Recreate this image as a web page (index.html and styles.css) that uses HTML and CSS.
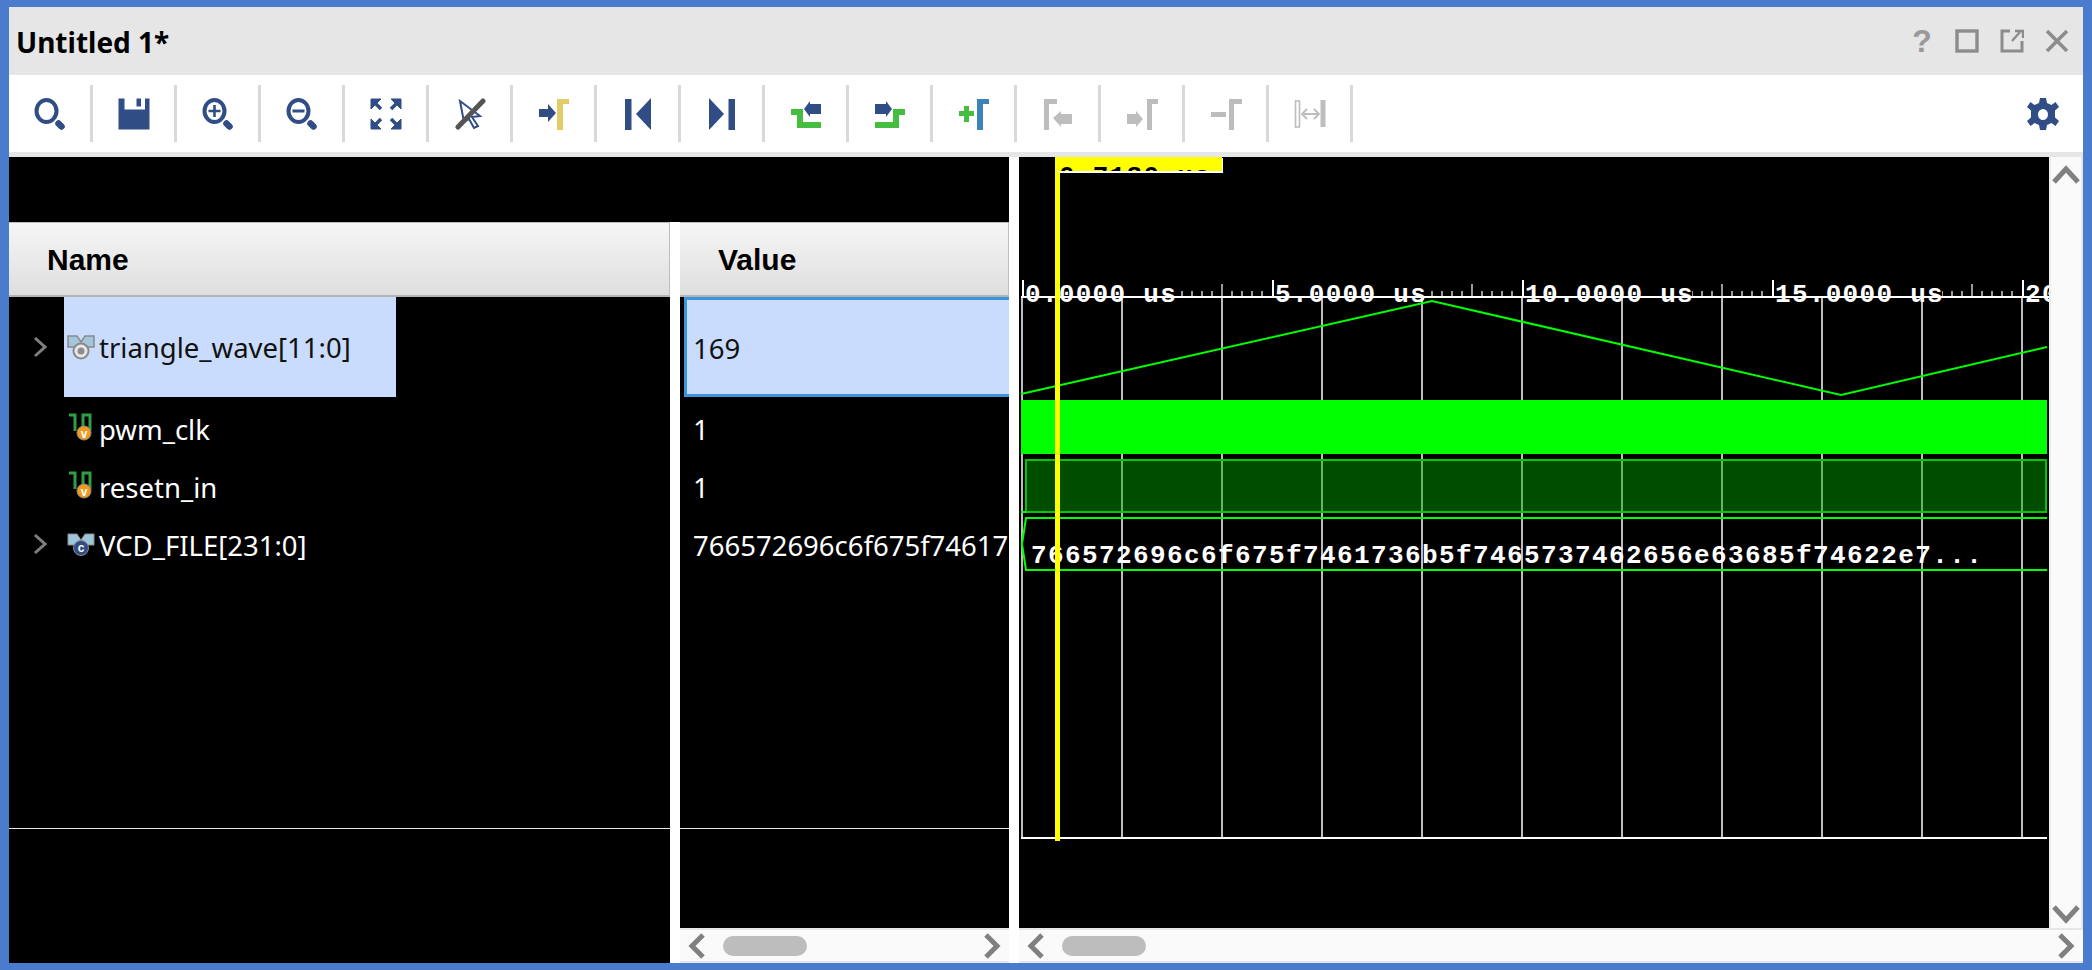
FILE: index.html
```html
<!DOCTYPE html>
<html lang="en">
<head>
<meta charset="utf-8">
<title>Untitled 1*</title>
<link rel="stylesheet" href="styles.css">
</head>
<body>
<div class="window">
  <header class="titlebar">
    <span class="title">Untitled 1*</span>
    <div class="win-actions">
      <span class="win-btn help">?</span>
      <span class="win-btn"><svg width="24" height="24" viewBox="0 0 24 24"><rect x="2" y="2" width="20" height="20" fill="none" stroke="#8c8c8c" stroke-width="3.4"/></svg></span>
      <span class="win-btn"><svg width="24" height="24" viewBox="0 0 24 24"><path d="M10 2H2V22H22V12" fill="none" stroke="#8c8c8c" stroke-width="3"/><path d="M12 12L20 3M15 2H23V9" fill="none" stroke="#8c8c8c" stroke-width="2.4"/></svg></span>
      <span class="win-btn"><svg width="24" height="24" viewBox="0 0 24 24"><path d="M2 2L22 22M22 2L2 22" fill="none" stroke="#8c8c8c" stroke-width="3.6"/></svg></span>
    </div>
  </header>

  <div class="toolbar">
    <button class="tool"><svg width="32" height="32" viewBox="0 0 32 32"><ellipse cx="12.500" cy="13" rx="10" ry="11" fill="none" stroke="#314d85" stroke-width="4"/><path d="M24.500 25.500L27.500 28.500" stroke="#314d85" stroke-width="6.500" stroke-linecap="round"/></svg></button>
    <button class="tool"><svg width="32" height="32" viewBox="0 0 32 32"><path d="M0.500 0.500H6.500V11.500H27V0.500H31.500V31.500H0.500Z" fill="#314d85"/><rect x="18.500" y="0.500" width="4.500" height="8" fill="#314d85"/></svg></button>
    <button class="tool"><svg width="32" height="32" viewBox="0 0 32 32"><ellipse cx="12.500" cy="13" rx="10" ry="11" fill="none" stroke="#314d85" stroke-width="4"/><path d="M24.500 25.500L27.500 28.500" stroke="#314d85" stroke-width="6.500" stroke-linecap="round"/><path d="M12.500 7V19M6.500 13H18.500" stroke="#314d85" stroke-width="2.600"/></svg></button>
    <button class="tool"><svg width="32" height="32" viewBox="0 0 32 32"><ellipse cx="12.500" cy="13" rx="10" ry="11" fill="none" stroke="#314d85" stroke-width="4"/><path d="M24.500 25.500L27.500 28.500" stroke="#314d85" stroke-width="6.500" stroke-linecap="round"/><path d="M6.500 13H18.500" stroke="#314d85" stroke-width="3"/></svg></button>
    <button class="tool"><svg width="32" height="32" viewBox="0 0 32 32" fill="#314d85" stroke="#314d85"><path d="M1 1H11L1 11Z"/><path d="M31 1H21L31 11Z"/><path d="M1 31H11L1 21Z"/><path d="M31 31H21L31 21Z"/><path d="M5 5L11 11M27 5L21 11M5 27L11 21M27 27L21 21" stroke-width="3.500"/></svg></button>
    <button class="tool"><svg width="32" height="32" viewBox="0 0 32 32"><path d="M6 3L26 18L18 19L24 28L20 30L15 21L10 24Z" fill="#fff" stroke="#314d85" stroke-width="2"/><path d="M4 29L29 3" stroke="#555" stroke-width="5" stroke-linecap="round"/></svg></button>
    <button class="tool"><svg width="32" height="32" viewBox="0 0 32 32"><path d="M1 11H10V6L18 15L10 24V19H1Z" fill="#314d85"/><path d="M19 32V1H31V6H25V32Z" fill="#e3cc68"/></svg></button>
    <button class="tool"><svg width="32" height="32" viewBox="0 0 32 32" fill="#314d85"><rect x="3" y="1" width="6.500" height="31"/><path d="M29 0V32L14 16Z"/></svg></button>
    <button class="tool"><svg width="32" height="32" viewBox="0 0 32 32" fill="#314d85"><rect x="22.500" y="1" width="6.500" height="31"/><path d="M3 0V32L18 16Z"/></svg></button>
    <button class="tool"><svg width="32" height="32" viewBox="0 0 32 32"><path d="M1 14H10V27H31" fill="none" stroke="#45bd3f" stroke-width="6"/><path d="M14 11L20 3V6H31V16H20V19Z" fill="#314d85"/></svg></button>
    <button class="tool"><svg width="32" height="32" viewBox="0 0 32 32"><path d="M1 27H22V14H31" fill="none" stroke="#45bd3f" stroke-width="6"/><path d="M18 11L12 3V6H1V16H12V19Z" fill="#314d85"/></svg></button>
    <button class="tool"><svg width="32" height="32" viewBox="0 0 32 32"><path d="M1 13H6V8H11V13H16V18H11V24H6V18H1Z" fill="#45bd3f"/><path d="M19 32V1H31V6H25V32Z" fill="#3a84b8"/></svg></button>
    <button class="tool"><svg width="32" height="32" viewBox="0 0 32 32" fill="#bdbdbd"><path d="M2 32V1H15V6H7V32Z"/><path d="M11 20L19 13V16H30V26H19V29Z"/></svg></button>
    <button class="tool"><svg width="32" height="32" viewBox="0 0 32 32" fill="#bdbdbd"><path d="M21 32V1H33V6H26V32Z"/><path d="M17 21L10 13V16H1V26H10V29Z"/></svg></button>
    <button class="tool"><svg width="32" height="32" viewBox="0 0 32 32" fill="#bdbdbd"><path d="M19 32V1H32V6H24V32Z"/><rect x="1" y="14" width="15" height="5"/></svg></button>
    <button class="tool"><svg width="32" height="32" viewBox="0 0 32 32"><rect x="1.500" y="3" width="4" height="26" fill="none" stroke="#bdbdbd" stroke-width="1.600"/><rect x="26.500" y="2" width="5" height="27" fill="#bdbdbd"/><path d="M9 16H24M13 11L8 16L13 21M20 11L25 16L20 21" fill="none" stroke="#bdbdbd" stroke-width="1.800"/></svg></button>
    <button class="tool gear"><svg width="32" height="32" viewBox="0 0 32 32" fill="#314d85"><path fill-rule="evenodd" d="M13 0H19L20 5L24.500 7L28.500 4L32 9L28 12.500V19.500L32 23L28.500 28L24.500 25L20 27L19 32H13L12 27L7.500 25L3.500 28L0 23L4 19.500V12.500L0 9L3.500 4L7.500 7L12 5ZM16 11A5 5.500 0 1 0 16 22A5 5.500 0 1 0 16 11Z"/></svg></button>
  </div>
  <div class="strip"></div>

  <main class="panes">
    <section class="signals">
      <div class="signals-top"></div>
      <div class="columns">
        <div class="col col-name">
          <div class="col-head">Name</div>
          <div class="list">
            <div class="row row-sel">
              <svg class="chev" width="16" height="22" viewBox="0 0 16 22"><path d="M3 2L13 11L3 20" fill="none" stroke="#808080" stroke-width="3"/></svg>
              <div class="sel-box">
                <svg class="sig-icon bus-icon" width="30" height="26" viewBox="0 0 30 26"><path d="M2 2H11L15 8L19 2H28V13H22L15 9L8 13H2Z" fill="#a3c6da" stroke="#8a8a8a" stroke-width="1.500"/><circle cx="15" cy="17" r="7.500" fill="#e8e8e8" stroke="#8a8a8a" stroke-width="2"/><circle cx="15" cy="17" r="3.500" fill="#8c8c8c"/></svg>
                <span class="label">triangle_wave[11:0]</span>
              </div>
            </div>
            <div class="row">
              <span class="chev-slot"></span>
              <svg class="sig-icon bit-icon" width="30" height="30" viewBox="0 0 30 30"><path d="M3 4H9V20M17 20V4H24V20" fill="none" stroke="#2f9e44" stroke-width="3"/><circle cx="18" cy="22" r="7" fill="#f39a1e" stroke="#8a8a8a" stroke-width="1"/><text x="18" y="26.500" class="badge">v</text></svg>
              <span class="label">pwm_clk</span>
            </div>
            <div class="row">
              <span class="chev-slot"></span>
              <svg class="sig-icon bit-icon" width="30" height="30" viewBox="0 0 30 30"><path d="M3 4H9V20M17 20V4H24V20" fill="none" stroke="#2f9e44" stroke-width="3"/><circle cx="18" cy="22" r="7" fill="#f39a1e" stroke="#8a8a8a" stroke-width="1"/><text x="18" y="26.500" class="badge">v</text></svg>
              <span class="label">resetn_in</span>
            </div>
            <div class="row">
              <svg class="chev chev-bus" width="16" height="22" viewBox="0 0 16 22"><path d="M3 2L13 11L3 20" fill="none" stroke="#808080" stroke-width="3"/></svg>
              <svg class="sig-icon bus-icon" width="30" height="26" viewBox="0 0 30 26"><path d="M2 1H11L15 7L19 1H28V12H22L15 8L8 12H2Z" fill="#9ec6db" stroke="#8a8a8a" stroke-width="1"/><circle cx="15" cy="15" r="7.500" fill="#314d85" stroke="#8a8a8a" stroke-width="1"/><text x="15" y="19" class="badge">c</text></svg>
              <span class="label">VCD_FILE[231:0]</span>
            </div>
          </div>
        </div>
        <div class="col col-value">
          <div class="col-head">Value</div>
          <div class="list">
            <div class="row row-sel"><div class="val-sel label">169</div></div>
            <div class="row val label">1</div>
            <div class="row val label">1</div>
            <div class="row val label">766572696c6f675f74617</div>
          </div>
          <div class="filler"></div>
          <div class="hscroll">
            <svg width="18" height="26" viewBox="0 0 18 26"><path d="M15 2L4 13L15 24" fill="none" stroke="#808080" stroke-width="5"/></svg>
            <span class="thumb"></span>
            <svg class="end" width="18" height="26" viewBox="0 0 18 26"><path d="M3 2L14 13L3 24" fill="none" stroke="#808080" stroke-width="5"/></svg>
          </div>
        </div>
      </div>
    </section>

    <section class="wave-pane">
      <div class="wave-main">
        <svg class="wave" width="1030" height="771" viewBox="1019 157 1030 771">
          <defs>
            <pattern id="ticks" x="1022" y="280" width="250" height="17" patternUnits="userSpaceOnUse">
              <path d="M10 11V17M20 11V17M30 11V17M40 11V17M60 11V17M70 11V17M80 11V17M90 11V17M110 11V17M120 11V17M130 11V17M140 11V17M160 11V17M170 11V17M180 11V17M190 11V17M210 11V17M220 11V17M230 11V17M240 11V17" stroke="#fff" stroke-width="1.200"/>
              <path d="M50 4V17M100 4V17M150 4V17M200 4V17" stroke="#fff" stroke-width="1.200"/>
              <path d="M1 0V17" stroke="#fff" stroke-width="2"/>
            </pattern>
          </defs>
          <rect x="1019" y="157" width="1030" height="771" fill="#000"/>
          <rect x="1022" y="280" width="1027" height="17" fill="url(#ticks)"/>
          <g class="ruler-bg">
            <rect x="1026" y="283" width="150" height="14"/>
            <rect x="1276" y="283" width="150" height="14"/>
            <rect x="1526" y="283" width="166" height="14"/>
            <rect x="1776" y="283" width="166" height="14"/>
            <rect x="2026" y="283" width="23" height="14"/>
          </g>
          <path class="grid" d="M1022 297V837M1122 297V837M1222 297V837M1322 297V837M1422 297V837M1522 297V837M1622 297V837M1722 297V837M1822 297V837M1922 297V837M2022 297V837"/>
          <rect x="1021" y="296" width="1028" height="2" fill="#fff"/>
          <g class="ruler-text">
            <text x="1025" y="302">0.0000 us</text>
            <text x="1275" y="302">5.0000 us</text>
            <text x="1525" y="302">10.0000 us</text>
            <text x="1775" y="302">15.0000 us</text>
            <text x="2025" y="302">20.0000 us</text>
          </g>
          <path class="trace" d="M1021 394L1432 301L1841 395L2047 347"/>
          <rect x="1021" y="400" width="1026" height="54" fill="#00ff00"/>
          <rect x="1026" y="460" width="1020" height="52" class="bit"/>
          <path class="trace" d="M1021 512H1026"/>
          <path class="trace" d="M2047 518H1026L1022 544L1026 570H2047"/>
          <text x="1031" y="563" class="bus-text">766572696c6f675f7461736b5f7465737462656e63685f74622e7...</text>
          <rect x="1021" y="837" width="1026" height="2" fill="#fff"/>
          <rect x="1056" y="158" width="165" height="13" fill="#ffff00"/>
          <path d="M1056 172H1222V158M1056 157.500H1222" fill="none" stroke="#fff" stroke-width="2"/>
          <svg x="1056" y="157" width="166" height="14" viewBox="1056 157 166 14"><rect x="1056" y="157" width="166" height="14" fill="#ffff00"/><text x="1059" y="184" class="cursor-text">0.7180 us</text></svg>
          <rect x="1055" y="172" width="5" height="669" fill="#ffff00"/>
          <rect x="1055" y="157" width="2" height="15" fill="#ffff00"/>
        </svg>
        <div class="vscroll">
          <svg width="28" height="20" viewBox="0 0 28 20"><path d="M2 17L14 4L26 17" fill="none" stroke="#808080" stroke-width="5"/></svg>
          <svg width="28" height="20" viewBox="0 0 28 20"><path d="M2 3L14 16L26 3" fill="none" stroke="#808080" stroke-width="5"/></svg>
        </div>
      </div>
      <div class="hscroll">
        <svg width="18" height="26" viewBox="0 0 18 26"><path d="M15 2L4 13L15 24" fill="none" stroke="#808080" stroke-width="5"/></svg>
        <span class="thumb"></span>
        <svg class="end" width="18" height="26" viewBox="0 0 18 26"><path d="M3 2L14 13L3 24" fill="none" stroke="#808080" stroke-width="5"/></svg>
      </div>
    </section>
  </main>
</div>
</body>
</html>
```

FILE: styles.css
```css
* { box-sizing: border-box; }
html, body { margin: 0; height: 100%; background: #fff; }
body { font-family: "Noto Sans", "Open Sans", sans-serif; overflow: hidden; }

.window {
  width: 2092px;
  height: 970px;
  border: solid #4a7bcd;
  border-width: 7px 9px;
  display: flex;
  flex-direction: column;
  background: #fff;
}

.titlebar {
  height: 68px;
  flex: none;
  background: #e6e6e6;
  display: flex;
  align-items: center;
  padding: 2px 14px 0 7px;
}
.title { font-size: 28px; font-weight: 700; color: #000; }
.win-actions { margin-left: auto; display: flex; align-items: center; gap: 21px; margin-top: -2px; }
.win-btn { width: 24px; height: 24px; display: flex; align-items: center; justify-content: center; }
.help { font-family: "Liberation Sans", sans-serif; font-size: 32px; font-weight: 700; color: #999; }

.toolbar {
  height: 77px;
  flex: none;
  background: #fff;
  display: flex;
  align-items: center;
}
.tool {
  width: 84px;
  height: 57px;
  padding: 0;
  border: 0;
  border-right: 3px solid #d9d9d9;
  background: none;
  display: flex;
  align-items: center;
  justify-content: center;
  flex: none;
}
.tool.gear { margin-left: auto; border-right: 0; width: 80px; }
.strip { height: 5px; flex: none; background: #e6e6e6; }

.panes { flex: 1; min-height: 0; display: flex; gap: 10px; }

.signals { width: 1000px; flex: none; display: flex; flex-direction: column; }
.signals-top { height: 65px; flex: none; background: #000; }
.columns { flex: 1; min-height: 0; display: flex; gap: 10px; }

.col { background: #000; display: flex; flex-direction: column; min-width: 0; }
.col-name { width: 661px; flex: none; }
.col-value { width: 329px; flex: none; }

.col-head {
  height: 75px;
  flex: none;
  display: flex;
  align-items: center;
  font-family: "Liberation Sans", sans-serif;
  font-size: 30px;
  font-weight: 700;
  color: #000;
  padding-top: 2px;
  background: linear-gradient(#f6f6f6, #dedede);
  border-top: 1px solid #bdbdbd;
  border-right: 1px solid #bdbdbd;
  border-bottom: 2px solid #b4b4b4;
}
.col-name .col-head { padding-left: 38px; }
.col-value .col-head { padding-left: 38px; }

.list { height: 532px; flex: none; border-bottom: 1px solid #e6e6e6; overflow: hidden; }
.row { height: 58px; display: flex; align-items: center; color: #fff; white-space: nowrap; }
.row-sel { height: 100px; margin-bottom: 4px; align-items: stretch; }

.label { font-size: 27.5px; }
.row > .label { margin-top: -2px; }
.chev { margin-left: 23px; flex: none; }
.chev-bus { margin-top: -4px; }
.row-sel .chev { align-self: center; }
.chev-slot { width: 39px; flex: none; }
.sig-icon { flex: none; }
.bit-icon { margin: -8px 3px 0 18px; }
.row > .bus-icon { margin: 0 3px 0 18px; }
.sel-box .bus-icon { margin: 0 3px 0 2px; }

.sel-box {
  width: 332px;
  margin-left: 16px;
  background: #c9dcfd;
  color: #111;
  display: flex;
  align-items: center;
}

.val { padding: 0 0 2px 13px; overflow: hidden; }
.val-sel {
  flex: 1;
  margin: 0 0 0 4px !important;
  background: #c9dcfd;
  color: #111;
  border: solid #3d94d8;
  border-width: 3px 0 3px 3px;
  display: flex;
  align-items: center;
  padding: 2px 0 0 6px;
}

.filler { flex: 1; }

.hscroll {
  height: 35px;
  flex: none;
  background: #fafafa;
  border-top: 2px solid #e6e6e6;
  border-bottom: 2px solid #e6e6e6;
  display: flex;
  align-items: center;
  padding: 0 8px;
}
.hscroll .thumb {
  width: 84px;
  height: 20px;
  margin-left: 17px;
  border-radius: 10px;
  background: #bdbdbd;
}
.hscroll .end { margin-left: auto; }

.wave-pane { flex: 1; min-width: 0; display: flex; flex-direction: column; }
.wave-main { flex: 1; min-height: 0; display: flex; }
.wave { display: block; flex: none; }

.vscroll {
  flex: 1;
  background: #fafafa;
  border-left: 2px solid #eee;
  border-right: 2px solid #e6e6e6;
  display: flex;
  flex-direction: column;
  align-items: center;
  justify-content: space-between;
  padding: 8px 0 4px;
}

.ruler-bg rect { fill: #000; }
.grid { stroke: #bdbdbd; stroke-width: 2; fill: none; }
.trace { stroke: #00ff00; stroke-width: 2; fill: none; }
.bit { fill: rgba(0, 171, 0, 0.45); stroke: #00c800; stroke-width: 2; }
.ruler-text text, .bus-text, .cursor-text {
  font-family: "Liberation Mono", monospace;
  font-weight: 700;
  font-size: 26px;
  letter-spacing: 1.3px;
}
.bus-text { letter-spacing: 1.4px; }
.ruler-text text, .bus-text { fill: #fff; }
.cursor-text { fill: #000; }
.badge {
  font-family: "Liberation Sans", sans-serif;
  font-size: 12px;
  font-weight: 700;
  text-anchor: middle;
  fill: #fff;
}
```
